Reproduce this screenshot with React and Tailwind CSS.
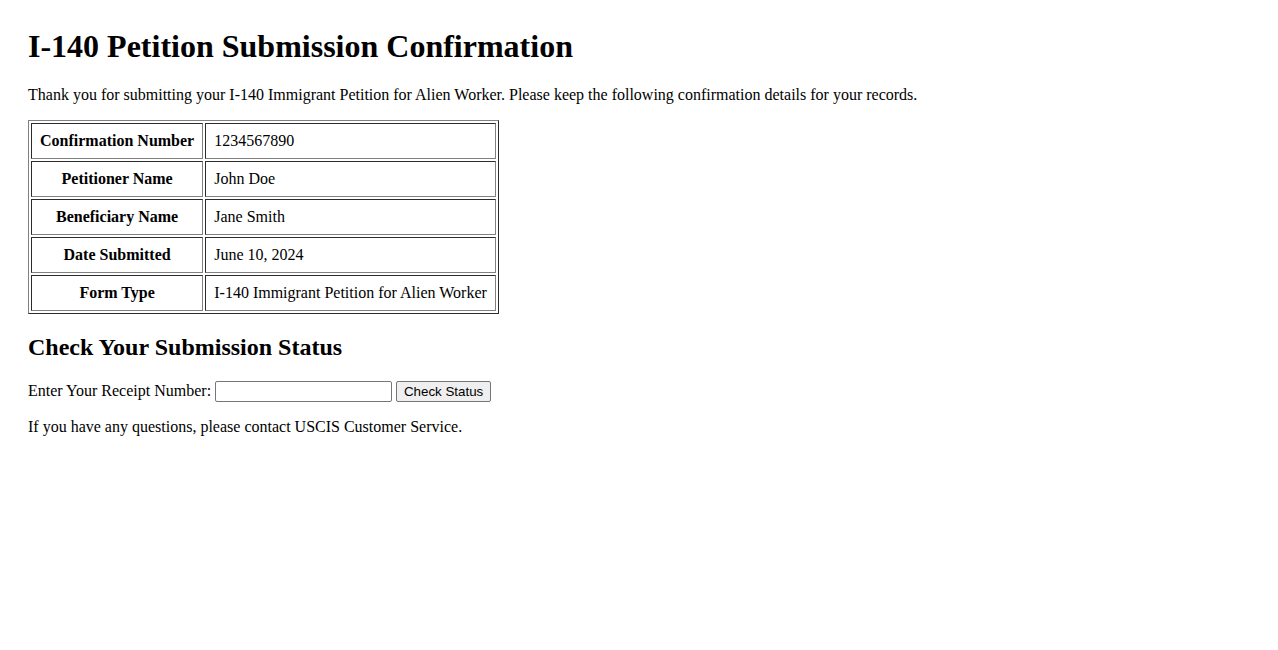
export default function App() {
  const rows = [
    ["Confirmation Number", "1234567890"],
    ["Petitioner Name", "John Doe"],
    ["Beneficiary Name", "Jane Smith"],
    ["Date Submitted", "June 10, 2024"],
    ["Form Type", "I-140 Immigrant Petition for Alien Worker"],
  ];
  return (
    <div className="min-h-[650px] bg-white p-[28px] text-black text-[16px] font-['Liberation_Serif','Times_New_Roman',serif]">
      <h1 className="mb-[21.44px] text-[32px] font-bold leading-[normal]">
        I-140 Petition Submission Confirmation
      </h1>
      <p className="mb-[16px] leading-[normal]">
        Thank you for submitting your I-140 Immigrant Petition for Alien Worker. Please keep the following confirmation details for your records.
      </p>
      <table className="border-separate border-spacing-[2px] border border-[#808080] [border-style:outset]">
        <tbody>
          {rows.map(([k, v]) => (
            <tr key={k}>
              <th className="border border-[#808080] [border-style:inset] p-[8px] text-center font-bold leading-[normal]">
                {k}
              </th>
              <td className="border border-[#808080] [border-style:inset] p-[8px] text-left leading-[normal]">
                {v}
              </td>
            </tr>
          ))}
        </tbody>
      </table>
      <h2 className="mt-[19.92px] mb-[19.92px] text-[24px] font-bold leading-[normal]">
        Check Your Submission Status
      </h2>
      <form className="mb-[16px] leading-[normal]" onSubmit={(e) => e.preventDefault()}>
        <label htmlFor="receipt">Enter Your Receipt Number:</label>{" "}
        <input
          id="receipt"
          type="text"
          className="h-[21px] w-[177px] rounded-[2px] border border-[#767676] bg-white px-[2px] text-[13.33px] leading-[normal] font-['Liberation_Sans',Arial,sans-serif]"
        />{" "}
        <button
          type="submit"
          className="h-[21px] w-[95px] rounded-[2px] border border-[#767676] bg-[#efefef] px-[6px] text-[13.33px] leading-[normal] font-['Liberation_Sans',Arial,sans-serif]"
        >
          Check Status
        </button>
      </form>
      <p className="leading-[normal]">
        If you have any questions, please contact USCIS Customer Service.
      </p>
    </div>
  );
}
